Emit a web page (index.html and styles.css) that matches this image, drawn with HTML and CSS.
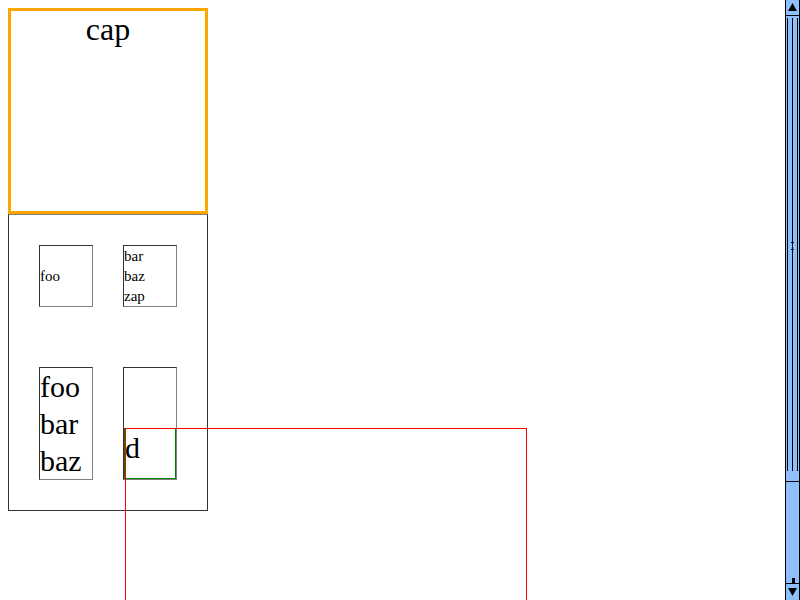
FILE: index.html
```html
<!DOCTYPE html>
<html>
<head>
<meta charset="utf-8">
<link rel="stylesheet" href="styles.css">
</head>
<body>
<div class="page">
  <div class="caption">cap</div>
  <div class="table">
    <div class="cell c1">foo</div>
    <div class="cell c2">bar<br>baz<br>zap</div>
    <div class="cell c3">foo<br>bar<br>baz</div>
    <div class="cell c4"><div class="green">d</div></div>
  </div>
  <div class="red"></div>
</div>
<div class="sb">
  <div class="sb-btn up">
    <svg width="13" height="15" viewBox="0 0 13 15"><polygon points="2,11 6.5,3 11,11" fill="#000"/></svg>
  </div>
  <div class="sb-thumb">
    <div class="sb-thumb-inner">
      <div class="sb-line"></div>
      <div class="grip"></div>
    </div>
  </div>
  <div class="sb-track"><div class="notch"></div></div>
  <div class="sb-btn down">
    <svg width="13" height="16" viewBox="0 0 13 16"><polygon points="2,4 11,4 6.5,12" fill="#000"/></svg>
  </div>
</div>
</body>
</html>
```
FILE: styles.css
```css
html, body {
  margin: 0;
  padding: 0;
  overflow: hidden;
  background: #fff;
}
body {
  display: flex;
  width: 800px;
  height: 600px;
  font-family: "Liberation Serif", "Times New Roman", serif;
  color: #000;
}
.page {
  position: relative;
  flex: 1;
  padding: 8px;
  overflow: hidden;
}
.caption {
  box-sizing: border-box;
  width: 200px;
  height: 206px;
  border: 3px solid #ffa500;
  text-align: center;
  font-size: 32px;
  line-height: 36px;
}
.table {
  box-sizing: border-box;
  width: 200px;
  height: 297px;
  border: 1px solid #333;
  border-top-color: #808080;
  padding: 30px;
  display: grid;
  grid-template-columns: 54px 54px;
  grid-template-rows: 62px 113px;
  column-gap: 30px;
  row-gap: 60px;
}
.cell {
  box-sizing: border-box;
  border: 1px solid;
  border-color: #333 #808080 #808080 #333;
  font-size: 15px;
  line-height: 20px;
}
.c1 {
  display: flex;
  align-items: center;
}
.c3 {
  font-size: 30px;
  line-height: 37px;
}
.c4 {
  display: flex;
  flex-direction: column;
  justify-content: flex-end;
}
.green {
  box-sizing: border-box;
  height: 51px;
  border: 1px solid #008000;
  font-size: 30px;
  line-height: 37.33px;
}
.red {
  position: absolute;
  left: 125px;
  top: 428px;
  width: 402px;
  height: 300px;
  box-sizing: border-box;
  border: 1px solid #ff0000;
}
.sb {
  width: 16px;
  height: 600px;
  flex: none;
  box-sizing: border-box;
  padding-left: 1px;
  background: #fff;
  display: flex;
  flex-direction: column;
}
.sb-btn {
  box-sizing: border-box;
  background: #8ec1fb;
  border-left: 1px solid #000;
  border-right: 1px solid #000;
  display: flex;
  justify-content: center;
}
.sb-btn svg { display: block; }
.up {
  height: 16px;
  border-bottom: 1px solid #000;
}
.down {
  height: 17px;
  border-top: 1px solid #000;
}
.sb-thumb {
  box-sizing: border-box;
  height: 466px;
  background: #8ec1fb;
  border-left: 1px solid #000;
  border-right: 1px solid #000;
  border-bottom: 1px solid #000;
  padding: 2px 1px 10px 1px;
}
.sb-thumb-inner {
  position: relative;
  box-sizing: border-box;
  height: 100%;
  border-left: 1px solid #000;
  border-right: 1px solid #000;
  display: flex;
  justify-content: center;
}
.sb-line {
  width: 1px;
  height: 100%;
  background: #000;
}
.grip {
  position: absolute;
  left: 3px;
  top: 224px;
  width: 3px;
  height: 6px;
  border-top: 1px solid #000;
  border-bottom: 1px solid #000;
}
.sb-track {
  flex: 1;
  position: relative;
  background: #8ec1fb;
  border-left: 1px solid #000;
  border-right: 1px solid #000;
}
.notch {
  position: absolute;
  left: 6px;
  bottom: 0;
  width: 3px;
  height: 5px;
  background: #000;
}
```
